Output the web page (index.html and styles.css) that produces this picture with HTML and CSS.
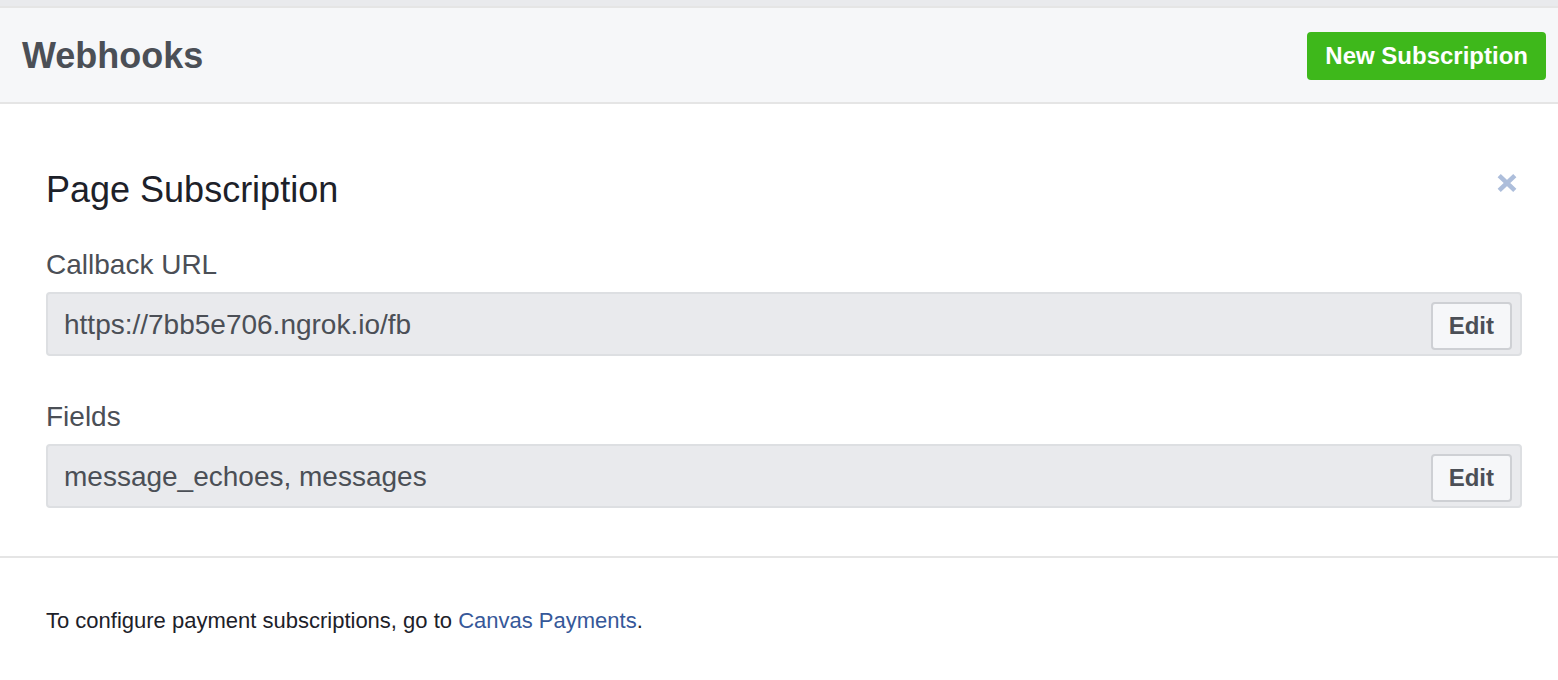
FILE: index.html
```html
<!DOCTYPE html>
<html lang="en">
<head>
<meta charset="utf-8">
<title>Webhooks</title>
<link rel="stylesheet" href="styles.css">
</head>
<body>
<header class="header">
  <h1 class="title">Webhooks</h1>
  <button class="btn btn-primary" type="button">New Subscription</button>
</header>
<main>
  <section class="subscription">
    <div class="section-head">
      <h2 class="section-title">Page Subscription</h2>
      <button class="close" type="button" aria-label="Remove subscription">
        <svg class="close-icon" viewBox="0 0 20 20" aria-hidden="true"><path d="M2.2 2.6 L17.8 17.4 M17.8 2.6 L2.2 17.4"/></svg>
      </button>
    </div>
    <div class="field">
      <label class="label" for="callback">Callback URL</label>
      <div class="control">
        <input class="input" id="callback" type="text" value="https://7bb5e706.ngrok.io/fb" readonly>
        <button class="btn btn-edit" type="button">Edit</button>
      </div>
    </div>
    <div class="field">
      <label class="label" for="fields">Fields</label>
      <div class="control">
        <input class="input" id="fields" type="text" value="message_echoes, messages" readonly>
        <button class="btn btn-edit" type="button">Edit</button>
      </div>
    </div>
  </section>
  <p class="note">To configure payment subscriptions, go to <a class="link" href="#">Canvas Payments</a>.</p>
</main>
</body>
</html>
```
FILE: styles.css
```css
* {
  box-sizing: border-box;
}

body {
  margin: 0;
  border-top: 6px solid #e9eaed;
  background: #fff;
  color: #1d2129;
  font-family: "Liberation Sans", Arial, sans-serif;
}

.header {
  display: flex;
  align-items: center;
  justify-content: space-between;
  padding: 24px 12px 22px 22px;
  background: #f6f7f9;
  border-top: 2px solid #e5e5e5;
  border-bottom: 2px solid #e5e5e5;
}

.title {
  margin: 0;
  color: #4b4f56;
  font-size: 36px;
  line-height: 48px;
}

.btn {
  height: 48px;
  padding: 0 16px;
  border: 2px solid;
  border-radius: 4px;
  font-family: inherit;
  font-size: 24px;
  font-weight: bold;
  line-height: 44px;
  white-space: nowrap;
}

.btn-primary {
  background: #3eb81b;
  border-color: #3eb81b;
  color: #fff;
}

.btn-edit {
  background: #f6f7f9;
  border-color: #ced0d4;
  color: #4b4f56;
}

.subscription {
  padding: 64px 36px 48px 46px;
  border-bottom: 2px solid #e5e5e5;
}

.section-head {
  display: flex;
  align-items: flex-start;
  justify-content: space-between;
  margin-bottom: 36px;
}

.section-title {
  margin: 0;
  font-size: 36px;
  font-weight: normal;
  line-height: 44px;
}

.close {
  display: flex;
  padding: 5px;
  border: 0;
  background: none;
}

.close-icon {
  width: 20px;
  height: 20px;
  fill: none;
  stroke: #adbedb;
  stroke-width: 4.6;
}

.field + .field {
  margin-top: 44px;
}

.label {
  display: block;
  margin-bottom: 10px;
  color: #4b4f56;
  font-size: 28px;
  line-height: 34px;
}

.control {
  display: flex;
  align-items: center;
  padding: 8px 8px 4px 16px;
  border: 2px solid #dddfe2;
  border-radius: 4px;
  background: #e9eaed;
}

.input {
  flex: 1;
  min-width: 0;
  padding: 0 0 2px;
  border: 0;
  outline: 0;
  background: none;
  color: #4b4f56;
  font-family: inherit;
  font-size: 28px;
}

.note {
  margin: 0;
  padding: 48px 46px;
  font-size: 22px;
  line-height: 30px;
}

.link {
  color: #365899;
  text-decoration: none;
}
```
